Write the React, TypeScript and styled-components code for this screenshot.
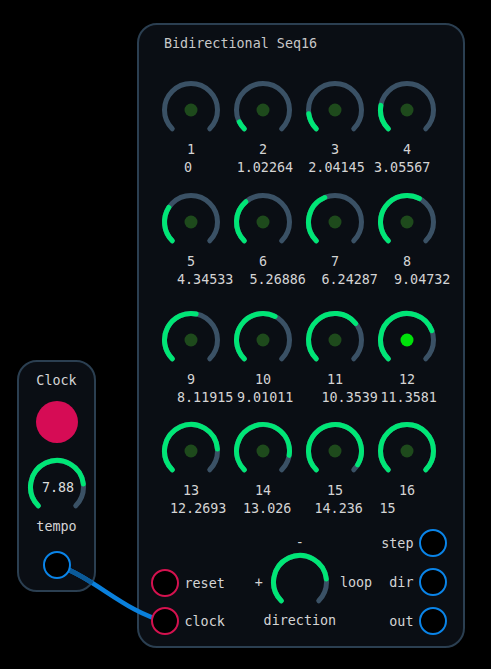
import React from 'react';
import styled, { createGlobalStyle } from 'styled-components';

const GlobalStyle = createGlobalStyle`
  body {
    margin: 0;
    background: #000;
    font-family: "DejaVu Sans Mono", "Liberation Mono", monospace;
    font-size: 13.4px;
    color: #d4d4d4;
  }
`;

const GREEN = '#00e676';
const TRACK = '#3a5165';

const knobs = [
  { label: '1', value: 0, text: '0', shift: 29 },
  { label: '2', value: 1.02264, text: '1.02264', shift: 9.7 },
  { label: '3', value: 2.04145, text: '2.04145', shift: 9.3 },
  { label: '4', value: 3.05567, text: '3.05567', shift: 3 },
  { label: '5', value: 4.34533, text: '4.34533', shift: 22 },
  { label: '6', value: 5.26886, text: '5.26886', shift: 22.5 },
  { label: '7', value: 6.24287, text: '6.24287', shift: 22.5 },
  { label: '8', value: 9.04732, text: '9.04732', shift: 23 },
  { label: '9', value: 8.11915, text: '8.11915', shift: 22 },
  { label: '10', value: 9.01011, text: '9.01011', shift: 10 },
  { label: '11', value: 10.3539, text: '10.3539', shift: 22.5 },
  { label: '12', value: 11.3581, text: '11.3581', shift: 9.5, active: true },
  { label: '13', value: 12.2693, text: '12.2693', shift: 15 },
  { label: '14', value: 13.026, text: '13.026', shift: 16 },
  { label: '15', value: 14.236, text: '14.236', shift: 15.5 },
  { label: '16', value: 15, text: '15', shift: 8.5 },
];

const rowGaps = [0, 15, 21, 14];

const point = (r: number, deg: number) => {
  const a = (deg * Math.PI) / 180;
  return `${30 + r * Math.sin(a)} ${30 - r * Math.cos(a)}`;
};

const arc = (r: number, from: number, to: number) => {
  const large = to - from > 180 ? 1 : 0;
  return `M ${point(r, from)} A ${r} ${r} 0 ${large} 1 ${point(r, to)}`;
};

type KnobProps = { fraction: number; dot?: 'none' | 'dim' | 'lit'; children?: React.ReactNode };

const Knob = ({ fraction, dot = 'dim', children }: KnobProps) => {
  const end = -135 + 270 * fraction;
  return (
    <KnobWrap>
      <svg width="60" height="60" viewBox="0 0 60 60">
        <path d={arc(26.5, -135, 135)} stroke={TRACK} strokeWidth="5" fill="none" strokeLinecap="round" />
        {fraction > 0 && (
          <path d={arc(26.5, -135, end)} stroke={GREEN} strokeWidth="5" fill="none" strokeLinecap="round" />
        )}
        {dot !== 'none' && <circle cx="30" cy="30" r="6.5" fill={dot === 'lit' ? '#00e20a' : '#1e4a1c'} />}
      </svg>
      {children && <KnobText>{children}</KnobText>}
    </KnobWrap>
  );
};

const cablePath = 'M 56.7 565 C 95 578, 125 612, 165 621.4';

const App = () => {
  const rows = [0, 1, 2, 3].map((r) => knobs.slice(r * 4, r * 4 + 4));
  return (
    <Stage>
      <GlobalStyle />
      <ClockPanel>
        <Line>Clock</Line>
        <RunButton />
        <Spacer $h={14} />
        <Knob fraction={0.81} dot="none">7.88</Knob>
        <Line $mt={1}>tempo</Line>
        <Spacer $h={15} />
        <Port $color="#0a84e8" />
      </ClockPanel>

      <MainPanel>
        <Title>Bidirectional Seq16</Title>
        {rows.map((row, i) => (
          <KnobRow key={i} $gap={rowGaps[i]}>
            {row.map((k) => (
              <Cell key={k.label}>
                <Knob fraction={k.value / 15} dot={k.active ? 'lit' : 'dim'} />
                <Label>{k.label}</Label>
                <Value $shift={k.shift}>{k.text}</Value>
              </Cell>
            ))}
          </KnobRow>
        ))}

        <Controls>
          <PortColumn $top={40} $gap={10}>
            <PortRow>
              <Port $color="#d4124f" />
              <span>reset</span>
            </PortRow>
            <PortRow>
              <Port $color="#d4124f" />
              <span>clock</span>
            </PortRow>
          </PortColumn>

          <DirectionGroup>
            <Sign>+</Sign>
            <KnobStack>
              <Line>-</Line>
              <Knob fraction={0.81} dot="none" />
              <Line>direction</Line>
            </KnobStack>
            <Loop>loop</Loop>
          </DirectionGroup>

          <PortColumn $top={0} $gap={11} $right>
            <PortRow>
              <span>step</span>
              <Port $color="#0a84e8" />
            </PortRow>
            <PortRow>
              <span>dir</span>
              <Port $color="#0a84e8" />
            </PortRow>
            <PortRow>
              <span>out</span>
              <Port $color="#0a84e8" />
            </PortRow>
          </PortColumn>
        </Controls>
      </MainPanel>

      <Cable width="491" height="669" viewBox="0 0 491 669">
        <defs>
          <clipPath id="clock-panel">
            <rect x="17" y="360" width="79" height="232" rx="20" />
          </clipPath>
        </defs>
        <path d={cablePath} stroke="#0a80dc" strokeWidth="4.5" fill="none" />
        <path d={cablePath} stroke="#0b5a98" strokeWidth="4.5" fill="none" clipPath="url(#clock-panel)" />
      </Cable>
    </Stage>
  );
};

const Stage = styled.div`
  position: relative;
  display: flex;
  align-items: flex-start;
  width: 491px;
  height: 669px;
  padding: 23px 0 0 17px;
  box-sizing: border-box;
  overflow: hidden;
`;

const Cable = styled.svg`
  position: absolute;
  left: 0;
  top: 0;
  z-index: 1;
  pointer-events: none;
`;

const Panel = styled.div`
  box-sizing: border-box;
  border: 2px solid #2b3f51;
  border-radius: 20px;
  background: #0a0e14;
`;

const ClockPanel = styled(Panel)`
  margin-top: 337px;
  width: 79px;
  height: 232px;
  padding: 10px 0 11px;
  display: flex;
  flex-direction: column;
  align-items: center;
`;

const MainPanel = styled(Panel)`
  margin-left: 41px;
  width: 328px;
  height: 625px;
  padding: 10px 0 10px;
`;

const Line = styled.div<{ $mt?: number }>`
  height: 18px;
  line-height: 18px;
  margin-top: ${(p) => p.$mt ?? 0}px;
  white-space: nowrap;
  text-align: center;
`;

const Spacer = styled.div<{ $h: number }>`
  height: ${(p) => p.$h}px;
  flex: none;
`;

const RunButton = styled.div`
  margin-top: 11px;
  width: 42px;
  height: 42px;
  border-radius: 50%;
  background: #d60c55;
  flex: none;
`;

const KnobWrap = styled.div`
  position: relative;
  width: 60px;
  height: 60px;
  flex: none;
  svg {
    display: block;
  }
`;

const KnobText = styled.div`
  position: absolute;
  inset: 0;
  display: flex;
  align-items: center;
  justify-content: center;
  padding-left: 3px;
  color: #dcdcdc;
`;

const Title = styled.div`
  height: 18px;
  line-height: 18px;
  padding-left: 25px;
  color: #c8c8c8;
  margin-bottom: 27px;
`;

const KnobRow = styled.div<{ $gap: number }>`
  display: grid;
  grid-template-columns: repeat(4, 72px);
  padding-left: 16px;
  margin-top: ${(p) => p.$gap}px;
`;

const Cell = styled.div`
  display: flex;
  flex-direction: column;
  align-items: center;
`;

const Label = styled.div`
  height: 18px;
  line-height: 18px;
  margin-top: 1px;
`;

const Value = styled.div<{ $shift: number }>`
  align-self: stretch;
  height: 18px;
  line-height: 18px;
  padding-left: ${(p) => p.$shift}px;
  white-space: nowrap;
`;

const Controls = styled.div`
  display: flex;
  align-items: flex-start;
  margin-top: 11px;
  padding: 0 16px 0 12px;
`;

const PortColumn = styled.div<{ $top: number; $gap: number; $right?: boolean }>`
  display: flex;
  flex-direction: column;
  align-items: ${(p) => (p.$right ? 'flex-end' : 'flex-start')};
  gap: ${(p) => p.$gap}px;
  margin-top: ${(p) => p.$top}px;
  margin-left: ${(p) => (p.$right ? 'auto' : '0')};
`;

const PortRow = styled.div`
  display: flex;
  align-items: center;
  gap: 5.5px;
  height: 28px;
`;

const Port = styled.div<{ $color: string }>`
  position: relative;
  z-index: 2;
  width: 28px;
  height: 28px;
  box-sizing: border-box;
  border-radius: 50%;
  border: 2px solid ${(p) => p.$color};
  background: #000;
  flex: none;
`;

const DirectionGroup = styled.div`
  display: flex;
  align-items: center;
  margin-left: 30px;
  margin-top: 5px;
`;

const Sign = styled.span`
  margin-right: 7px;
`;

const KnobStack = styled.div`
  width: 60px;
  display: flex;
  flex-direction: column;
  align-items: center;
`;

const Loop = styled.span`
  margin-left: 10px;
`;

export default App;
